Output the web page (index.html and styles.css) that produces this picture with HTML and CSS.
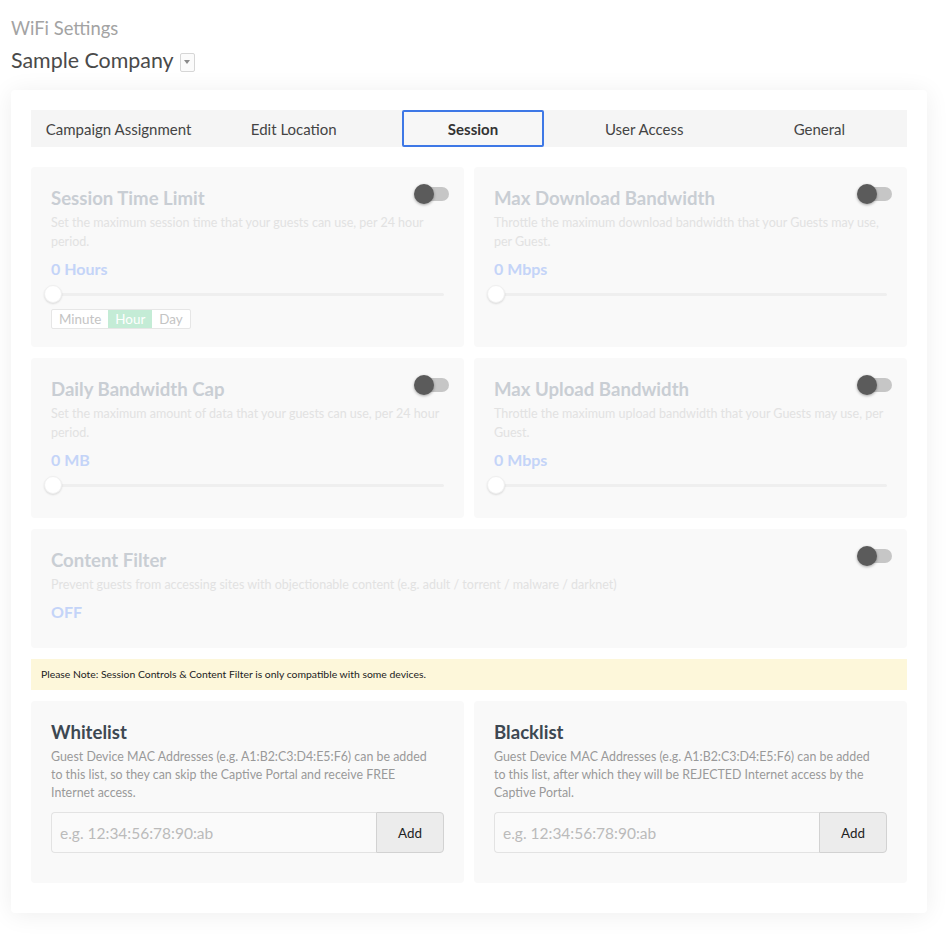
FILE: index.html
```html
<!DOCTYPE html>
<html>
<head>
    <meta charset="utf-8">
    <link rel="stylesheet" href="styles.css">
</head>
<body>
    <div class="page-head">
        <div class="page-title">WiFi Settings</div>
        <div class="company">
            Sample Company
            <span class="company-drop"><span class="caret"></span></span>
        </div>
    </div>

    <div class="panel">
        <div class="tabs">
            <div class="tab">Campaign Assignment</div>
            <div class="tab">Edit Location</div>
            <div class="tab active"><span class="tab-box">Session</span></div>
            <div class="tab">User Access</div>
            <div class="tab">General</div>
        </div>

        <div class="grid">
            <div class="box disabled">
                <div class="toggle"><span class="knob"></span></div>
                <div class="box-title">Session Time Limit</div>
                <div class="box-desc">Set the maximum session time that your guests can use, per 24 hour period.</div>
                <div class="box-value">0 Hours</div>
                <div class="slider"><span class="handle"></span></div>
                <div class="units">
                    <span class="unit">Minute</span>
                    <span class="unit on">Hour</span>
                    <span class="unit">Day</span>
                </div>
            </div>

            <div class="box disabled">
                <div class="toggle"><span class="knob"></span></div>
                <div class="box-title">Max Download Bandwidth</div>
                <div class="box-desc">Throttle the maximum download bandwidth that your Guests may use, per Guest.</div>
                <div class="box-value">0 Mbps</div>
                <div class="slider"><span class="handle"></span></div>
            </div>

            <div class="box disabled">
                <div class="toggle"><span class="knob"></span></div>
                <div class="box-title">Daily Bandwidth Cap</div>
                <div class="box-desc">Set the maximum amount of data that your guests can use, per 24 hour period.</div>
                <div class="box-value">0 MB</div>
                <div class="slider"><span class="handle"></span></div>
            </div>

            <div class="box disabled">
                <div class="toggle"><span class="knob"></span></div>
                <div class="box-title">Max Upload Bandwidth</div>
                <div class="box-desc">Throttle the maximum upload bandwidth that your Guests may use, per Guest.</div>
                <div class="box-value">0 Mbps</div>
                <div class="slider"><span class="handle"></span></div>
            </div>

            <div class="box disabled wide filter">
                <div class="toggle"><span class="knob"></span></div>
                <div class="box-title">Content Filter</div>
                <div class="box-desc">Prevent guests from accessing sites with objectionable content (e.g. adult / torrent / malware / darknet)</div>
                <div class="box-value">OFF</div>
            </div>

            <div class="note wide">Please Note: Session Controls &amp; Content Filter is only compatible with some devices.</div>

            <div class="box list">
                <div class="box-title">Whitelist</div>
                <div class="box-desc">Guest Device MAC Addresses (e.g. A1:B2:C3:D4:E5:F6) can be added to this list, so they can skip the Captive Portal and receive FREE Internet access.</div>
                <div class="mac-group">
                    <input class="mac-input" type="text" placeholder="e.g. 12:34:56:78:90:ab">
                    <button class="mac-add">Add</button>
                </div>
            </div>

            <div class="box list">
                <div class="box-title">Blacklist</div>
                <div class="box-desc">Guest Device MAC Addresses (e.g. A1:B2:C3:D4:E5:F6) can be added to this list, after which they will be REJECTED Internet access by the Captive Portal.</div>
                <div class="mac-group">
                    <input class="mac-input" type="text" placeholder="e.g. 12:34:56:78:90:ab">
                    <button class="mac-add">Add</button>
                </div>
            </div>
        </div>
    </div>
</body>
</html>
```

FILE: styles.css
```css
body {
    margin: 0;
    padding: 0 19px 26px 11px;
    background: #ffffff;
    font-family: Lato, "Open Sans", sans-serif;
    color: #333333;
}

/* header */
.page-head {
    padding-top: 16px;
}

.page-title {
    font-size: 18.4px;
    line-height: 24px;
    color: #a3a3a3;
}

.company {
    display: flex;
    align-items: center;
    gap: 6px;
    margin-top: 7px;
    font-size: 21.4px;
    line-height: 26px;
    color: #4a4a4a;
}

.company-drop {
    display: flex;
    align-items: center;
    justify-content: center;
    width: 13px;
    height: 17px;
    margin-top: 4px;
    border: 1px solid #d6d6d6;
    border-radius: 2px;
    background: #fbfbfb;
}

.caret {
    width: 0;
    height: 0;
    border-left: 3px solid transparent;
    border-right: 3px solid transparent;
    border-top: 4px solid #8a8a8a;
}

/* main card */
.panel {
    margin-top: 17px;
    padding: 20px 20px 30px;
    background: #ffffff;
    border-radius: 4px;
    box-shadow: 0 2px 24px rgba(0, 0, 0, 0.07);
}

.tabs {
    display: grid;
    grid-template-columns: repeat(5, 1fr);
    height: 37px;
    background: #f5f5f5;
}

.tab {
    display: flex;
    align-items: center;
    justify-content: center;
    font-size: 15px;
    color: #444444;
}

.tab.active {
    font-weight: 700;
    color: #333333;
}

.tab-box {
    display: flex;
    align-items: center;
    justify-content: center;
    box-sizing: border-box;
    width: 142px;
    height: 37px;
    margin-left: 8px;
    border: 2px solid #3e78e6;
    border-radius: 2px;
    background: #f7f7f7;
}

.grid {
    display: grid;
    grid-template-columns: 1fr 1fr;
    gap: 11px 10px;
    margin-top: 20px;
}

.wide {
    grid-column: 1 / 3;
}

.box {
    position: relative;
    padding: 20px 20px 19px;
    background: #f9f9f9;
    border-radius: 4px;
}

.box-title {
    font-size: 18.6px;
    line-height: 22px;
    font-weight: 700;
    color: #3d4852;
}

.box-desc {
    margin-top: 4px;
    font-size: 12.5px;
    line-height: 19px;
    color: #999999;
}

.box-value {
    margin-top: 8px;
    font-size: 16px;
    line-height: 20px;
    font-weight: 700;
    color: #c4d4f8;
}

/* faded state for the disabled controls */
.disabled .box-title {
    color: #c9ced4;
}

.disabled .box-desc {
    color: #e2e2e2;
}

.filter {
    padding-bottom: 26px;
}

.toggle {
    position: absolute;
    top: 20px;
    right: 15px;
    width: 29px;
    height: 14px;
    border-radius: 7px;
    background: #c6c6c6;
}

.knob {
    position: absolute;
    top: -3px;
    left: -6px;
    width: 20px;
    height: 20px;
    border-radius: 50%;
    background: #5b5b5b;
    box-shadow: 0 1px 3px rgba(0, 0, 0, 0.35);
}

.slider {
    position: relative;
    height: 26px;
    margin-top: 2px;
    margin-bottom: 1px;
}

.slider::before {
    content: "";
    position: absolute;
    left: 2px;
    right: 0;
    top: 12px;
    height: 3px;
    border-radius: 2px;
    background: #efefef;
}

.handle {
    position: absolute;
    left: -7px;
    top: 4px;
    width: 18px;
    height: 18px;
    border-radius: 50%;
    background: #ffffff;
    box-shadow: 0 1px 2px rgba(0, 0, 0, 0.12);
    border: 1px solid #f0f0f0;
    box-sizing: border-box;
}

.units {
    display: inline-flex;
    margin-top: -2px;
    margin-bottom: -1px;
    border: 1px solid #e6e6e6;
    border-radius: 2px;
    background: #ffffff;
}

.unit {
    padding: 0 7px;
    font-size: 13.4px;
    line-height: 18px;
    color: #c4c4c4;
}

.unit.on {
    background: #c4ecd6;
    color: #ffffff;
}

/* note */
.note {
    padding: 0 10px;
    font-size: 10.4px;
    line-height: 31px;
    color: #222222;
    background: #fdf7da;
}

/* whitelist / blacklist */
.list {
    padding-bottom: 30px;
}

.list .box-desc {
    margin-top: 5px;
    padding-right: 5px;
    font-size: 12.4px;
    line-height: 18px;
}

.mac-group {
    display: flex;
    margin-top: 10px;
    height: 41px;
}

.mac-input {
    flex: 1;
    min-width: 0;
    box-sizing: border-box;
    padding: 0 8px;
    border: 1px solid #e3e3e3;
    border-right: none;
    border-radius: 4px 0 0 4px;
    background: #fafafa;
    font-family: Lato, sans-serif;
    font-size: 15.5px;
    color: #555555;
    outline: none;
}

.mac-input::placeholder {
    color: #bbbbbb;
}

.mac-add {
    width: 68px;
    border: 1px solid #d2d2d2;
    border-radius: 0 4px 4px 0;
    background: #ececec;
    font-family: Lato, sans-serif;
    font-size: 13.4px;
    color: #222222;
}
```
